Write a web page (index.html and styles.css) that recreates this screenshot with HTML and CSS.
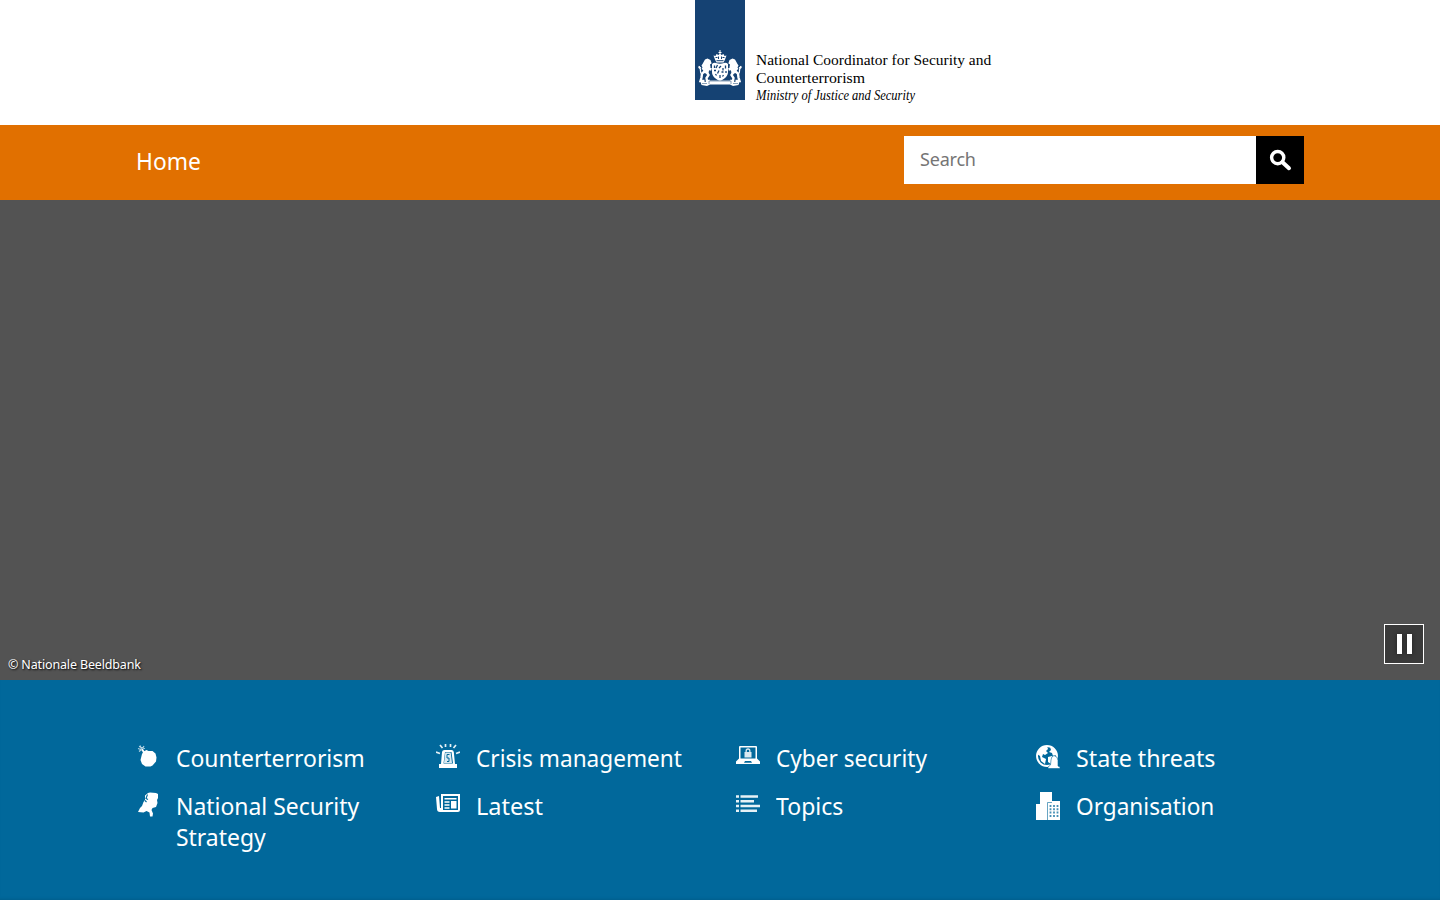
FILE: index.html
```html
<!DOCTYPE html>
<html lang="en">
<head>
<meta charset="utf-8">
<title>National Coordinator for Security and Counterterrorism</title>
<link rel="stylesheet" href="styles.css">
</head>
<body>
<header class="header">
  <div class="logo">
    <div class="ribbon">
      <svg class="arms" width="46" height="38" viewBox="0 0 46 38" fill="#fff">
        <path d="M22.500 0h1v2h1v1h-1v2h-1V3h-1V2h1z"/>
        <path d="M16.500 5.500l2 .5 1-2 2 1 1-1h1l1 1 2-1 1 2 2-.5-1.500 4-1.500 3h-7l-1.500-3z"/>
        <path d="M18.500 7.500h2M21.500 6.500v2.500M24.500 6.500v2.500M25.500 7.500h2M19.500 10.700h7" stroke="#154273" stroke-width="1" fill="none"/>
        <path d="M15 14q2-2 4-1 4 1.500 8 0 2-1 4 1v8c0 4-3 7-8 9-5-2-8-5-8-9z"/>
        <path d="M17.500 15.500v2.500M20.500 15l-1.500 3M24 16l-2 2M28.500 15.500v3M26 18v2.500M17 20.500h2M22 20.500l-1.500 3M24.500 22h2M29 21v2M18.500 24l1 1.500M23 25v3M26.500 25l-1 1.500" stroke="#154273" stroke-width="1.300" fill="none"/>
        <g id="lion">
          <path d="M8 9.500l2.500-1 3 1.500 1 3-1.500 1.500.5 2.500-1.500 4-1 3-4-1-1-3-1.500-1 1-1.500-1-2 1-1.500z"/>
          <path d="M10 14.500l4-2M10 18l4.500 1.500M8 21l-3 2.500-.5 4-1 3.500h4M9 21l2.500 4-2 3 .5 3H13" fill="none" stroke="#fff" stroke-width="2.400"/>
          <path d="M5 24C2 23 4.500 20 3 18.500S1.500 18 2.500 16M4 18L1.500 16.500" fill="none" stroke="#fff" stroke-width="1.300"/>
        </g>
        <use href="#lion" transform="matrix(-1 0 0 1 46 0)"/>
        <path d="M3.500 31.500l7 .5 2-1.500h21l2 1.500 7-.500-1 3.500-5.500 1-3-1.500H13L10 36l-5.500-1z"/>
        <path d="M12 34V31h22v3M5 33.500h5M36 33.500h5" fill="none" stroke="#154273" stroke-width=".5"/>
      </svg>
    </div>
    <div class="wordmark"><span class="w1">National Coordinator for Security and</span><span class="w2">Counterterrorism</span><em>Ministry of Justice and Security</em></div>
  </div>
</header>
<nav class="bar">
  <div class="inner">
    <a class="home">Home</a>
    <form class="search">
      <input class="field" type="text" placeholder="Search" aria-label="Search">
      <button class="go" type="button" aria-label="Start search">
        <svg width="24" height="24" viewBox="0 0 24 24" fill="none" stroke="#fff"><circle cx="9.700" cy="9.600" r="6.100" stroke-width="3.400"/><path d="M14.500 14.200L21 20.200" stroke-width="4" stroke-linecap="round"/></svg>
      </button>
    </form>
  </div>
</nav>
<section class="hero">
  <span class="credit">© Nationale Beeldbank</span>
  <button class="pause" type="button" aria-label="Pause"><span></span><span></span></button>
</section>
<main class="topics">
  <ul class="grid">
    <li><svg class="icon" width="24" height="28" viewBox="0 0 24 28"><path fill="#fff" d="M6 10l1.500-2.500 3-1.500 2 1h4l3 2.500 1 4-.500 4-3.500 4-2 1h-5l-3.500-2.500-1.500-4 .5-2z"/><path d="M8.500 9.500L6 5" stroke="#fff" stroke-width="1.800"/><path d="M6 6L2 4.500M5.500 5L4 1.500M6.500 4.500L8 2M3 2.500l6 2M5 6l-2 1.500" fill="none" stroke="#b5d3e3" stroke-width="1.200"/></svg><a class="w95">Counterterrorism</a></li>
    <li><svg class="icon" width="24" height="28" viewBox="0 0 24 28"><path fill="#fff" fill-rule="evenodd" d="M8.500 6h7q2 0 2.300 2l1.200 12h2v4H3v-4h2L6 8Q6.300 6 8.500 6zm.5 2L7.500 19.500h9.500L15.500 8z"/><path d="M9.300 8.500h5.400l1.300 10.500H8z" fill="#d9e9f1"/><path d="M13.500 10.500h-2.500v3.500h2v3.500h-2" stroke="#01689b" fill="none"/><path d="M0 8l4 1.500M4 1l2.500 3M9.500 0v3M14.500 0v3M20 1l-2.500 3M24 8l-4 1.500" stroke="#e6f1f6" stroke-width="1.700"/></svg><a class="w945">Crisis management</a></li>
    <li><svg class="icon" width="24" height="28" viewBox="0 0 24 28"><path fill="#fff" fill-rule="evenodd" d="M4 2h16q1 0 1 1v11.500l3 3V20H0v-2.500l3-3V3q0-1 1-1zm.500 1.500v11h15v-11zM9 17l-1 1.700h8L15 17z"/><path fill="#d9e9f1" d="M8.500 8h1V7q0-2.700 2.500-2.700T14.500 7v1h1v5.500h-7z"/><path fill="#01689b" d="M10.800 8V7q0-1.200 1.200-1.200T13.200 7v1z"/></svg><a class="w945">Cyber security</a></li>
    <li><svg class="icon" width="24" height="28" viewBox="0 0 24 28"><circle cx="11" cy="12" r="10" fill="none" stroke="#fff" stroke-width="1.900"/><path fill="#fff" d="M2 8l4-5 5-1 1 3-2 2 2 2-3 2-2-1-1 3 4 2-1 5-4-3-1-5-3-2zM14 3l5 3 2 5-4 1-1-3-3-1 2-2zM12 13l4-1 2 3-3 5-3-2z"/><path d="M18 11.500q4 1 4 5V22l2 1v1.500H12V23l2.500-2 .5-5q0-3.500 3-4.500z" fill="#fff" stroke="#01689b" stroke-width=".6"/></svg><a class="w97">State threats</a></li>
    <li><svg class="icon" width="24" height="28" viewBox="0 0 24 28"><path fill="#fff" d="M9 3.500l3-2.500 2-.5 6 .5 2 1v4l-1 2 .5 3-1.500 4-3.500 1-1 2 1.500 3.500-.5 3h-2.500l-.5-4-3-1.500-3 1.500-5.500-.5L4 16l2-2 1.500-4L9 8z"/><path d="M11.500 2.500l-1.500 4 2 1M9 8.500l1.500 1.500" fill="none" stroke="#01689b" stroke-width="1.100"/></svg><a class="w95">National Security<br>Strategy</a></li>
    <li><svg class="icon" width="24" height="28" viewBox="0 0 24 28"><path fill="#fff" fill-rule="evenodd" d="M5 2h19v16q0 2-2 2H4q-3 0-3-3L0 5l3-1 1 12h1zm2 2v14h15V4z"/><path stroke="#fff" stroke-width="1.500" d="M8.500 6.700h12M8.500 10h5M8.500 13h5M8.500 16h5"/><path fill="#fff" d="M15 9h5.500v7.500H15z"/></svg><a class="w975">Latest</a></li>
    <li><svg class="icon" width="24" height="28" viewBox="0 0 24 28"><path stroke="#e6f1f6" stroke-width="2.600" d="M0 4.500h3M4.500 4.500H22M0 9.200h3M4.500 9.200H18M0 14h3M4.500 14H24M0 18.700h3M4.500 18.700H21"/></svg><a class="w955">Topics</a></li>
    <li><svg class="icon" width="24" height="28" viewBox="0 0 24 28"><path fill="#fff" d="M0 12h4V0h12v9h8v19H0z"/><path d="M11.500 28V10.500H16" fill="none" stroke="#01689b" stroke-width=".6"/><path d="M14.500 13v12M18 13v12M21.500 13v12" stroke="#4590b6" stroke-width="1.800" stroke-dasharray="2 1.300"/></svg><a class="w945">Organisation</a></li>
  </ul>
</main>
</body>
</html>
```
FILE: styles.css
```css
* { box-sizing: border-box; }
body { margin: 0; height: 900px; overflow: hidden; display: flex; flex-direction: column; font-family: "Noto Sans", sans-serif; background: #fff; }
.header { height: 125px; flex: none; padding-left: 695px; }
.logo { display: flex; gap: 11px; }
.ribbon { width: 50px; height: 100px; background: #154273; padding: 50px 2px 0; }
.arms { display: block; }
.wordmark { padding-top: 51px; font: 15px/18px "Liberation Serif", serif; color: #000; white-space: nowrap; }
.wordmark span, .wordmark em { display: block; width: max-content; transform-origin: 0 50%; }
.w1 { transform: scaleX(1.03); }
.w2 { transform: scaleX(1.055); }
.wordmark em { line-height: 17px; transform: scaleX(.833); }
.bar { height: 75px; flex: none; background: #e17000; }
.inner { width: 1168px; margin: 0 auto; display: flex; justify-content: space-between; padding-top: 11px; }
.home { font-size: 24px; line-height: 50px; color: #fff; transform: scaleX(.95); transform-origin: 0 50%; }
.search { display: flex; width: 400px; height: 48px; }
.field { width: 352px; height: 48px; border: 0; border-radius: 0; padding: 0 16px 2px; background: #fff; font: 18px "Noto Sans", sans-serif; letter-spacing: -0.2px; }
.field::placeholder { color: #757575; }
.go { width: 48px; height: 48px; border: 0; padding: 0; background: #000; display: flex; align-items: center; justify-content: center; }
.hero { height: 480px; flex: none; background: #535353; display: flex; justify-content: space-between; align-items: flex-end; padding: 0 16px 0 8px; }
.credit { font-size: 12.500px; line-height: 18px; letter-spacing: -.15px; color: #fff; text-shadow: 1px 1px 2px #000; padding-bottom: 6px; }
.pause { width: 40px; height: 40px; margin-bottom: 16px; border: 1px solid #fff; background: #3a3a3a; padding: 0; display: flex; align-items: center; justify-content: center; gap: 5px; }
.pause span { width: 5px; height: 20px; background: #fff; box-shadow: 0 0 4px #222; }
.topics { flex: 1; background: #01689b; padding-top: 62px; box-shadow: inset 0 -3px 3px -2px rgba(0, 0, 0, .1); }
.grid { list-style: none; width: 1168px; margin: 0 auto; padding: 0; display: grid; grid-template-columns: repeat(3, 300px) 268px; row-gap: 17px; }
.grid li { display: flex; gap: 16px; color: #fff; font-size: 24px; line-height: 31px; white-space: nowrap; }
.grid a { transform-origin: 0 50%; }
.w945 { transform: scaleX(.942); }
.w95 { transform: scaleX(.955); }
.w955 { transform: scaleX(.96); }
.w97 { transform: scaleX(.97); }
.w975 { transform: scaleX(.98); }
.icon { flex: none; margin-top: 2px; }
```
